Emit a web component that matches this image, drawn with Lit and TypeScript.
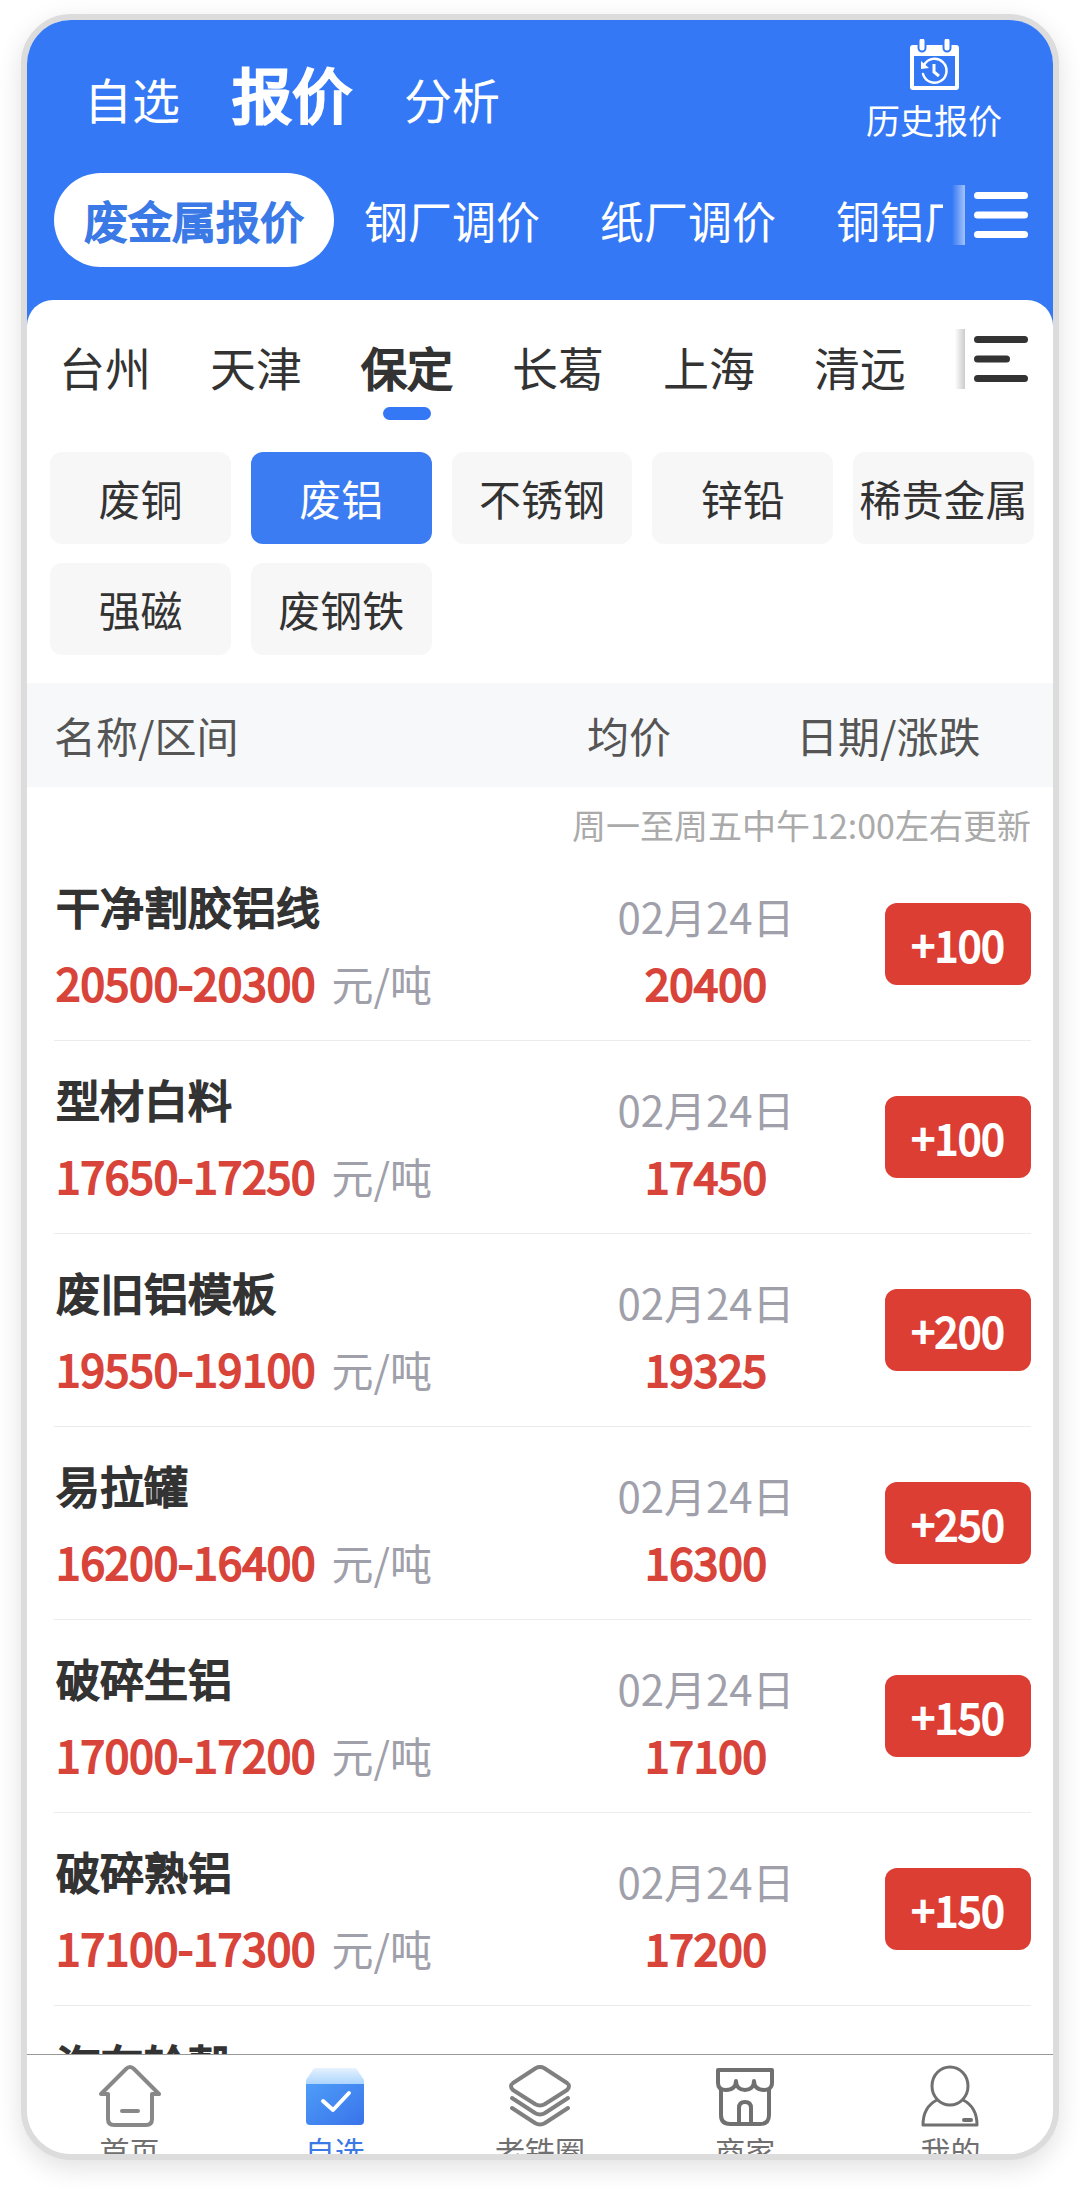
import { LitElement, html, css, svg, nothing } from "lit";
import { customElement, state } from "lit/decorators.js";
import { classMap } from "lit/directives/class-map.js";

interface Quote {
  name: string;
  range?: string;
  date?: string;
  average?: string;
  change?: string;
}

const SECTIONS = ["自选", "报价", "分析"];
const MARKETS = ["废金属报价", "钢厂调价", "纸厂调价", "铜铝厂"];
const CITIES = ["台州", "天津", "保定", "长葛", "上海", "清远"];
const METALS = ["废铜", "废铝", "不锈钢", "锌铅", "稀贵金属", "强磁", "废钢铁"];

const QUOTES: Quote[] = [
  { name: "干净割胶铝线", range: "20500-20300", date: "02月24日", average: "20400", change: "+100" },
  { name: "型材白料", range: "17650-17250", date: "02月24日", average: "17450", change: "+100" },
  { name: "废旧铝模板", range: "19550-19100", date: "02月24日", average: "19325", change: "+200" },
  { name: "易拉罐", range: "16200-16400", date: "02月24日", average: "16300", change: "+250" },
  { name: "破碎生铝", range: "17000-17200", date: "02月24日", average: "17100", change: "+150" },
  { name: "破碎熟铝", range: "17100-17300", date: "02月24日", average: "17200", change: "+150" },
  { name: "汽车轮毂" },
];

const ICONS = {
  home: svg`
    <g fill="none" stroke="#888" stroke-width="4" stroke-linejoin="round" stroke-linecap="round">
      <path d="M9 29H2L27 4Q31 0 35 4L60 29H53V54Q53 60 47 60H15Q9 60 9 54Z" />
      <path d="M23 46H39" />
    </g>`,
  box: svg`
    <defs>
      <linearGradient id="lid" x1="0" y1="0" x2="0" y2="1">
        <stop offset="0" stop-color="#e6f2fe" /><stop offset="1" stop-color="#a9d3fd" />
      </linearGradient>
      <linearGradient id="body" x1="0" y1="0" x2="1" y2="1">
        <stop offset="0" stop-color="#4e9df8" /><stop offset="1" stop-color="#3973ea" />
      </linearGradient>
    </defs>
    <path d="M12 3H50Q53 3 54 6L60 15V20H2V15L8 6Q9 3 12 3Z" fill="url(#lid)" />
    <path d="M2 19H60V56Q60 60 56 60H6Q2 60 2 56Z" fill="url(#body)" />
    <path d="M19 36L29 45L45 28" fill="none" stroke="#fff" stroke-width="4" stroke-linecap="round" stroke-linejoin="round" />`,
  layers: svg`
    <g fill="none" stroke="#808080" stroke-width="4" stroke-linecap="round" stroke-linejoin="round">
      <path d="M27 3Q31 1 35 3L58 18Q62 21 58 25L36 39Q31 42 26 39L4 25Q0 21 4 18Z" />
      <path d="M3 33L26 48Q31 51 36 48L59 33" />
      <path d="M3 43L26 58Q31 61 36 58L59 43" />
    </g>`,
  shop: svg`
    <g fill="none" stroke="#707070" stroke-width="4" stroke-linejoin="round">
      <path d="M4 5H58V18C58 23 54 25 50 25C44 25 40 22 40 16C40 22 36 25 31 25C26 25 22 22 22 16C22 22 18 25 12 25C7 25 4 23 4 18Z" />
      <path d="M7 24V50Q7 59 16 59H46Q55 59 55 50V24" />
      <path d="M25 59V43Q25 37 31 37Q37 37 37 43V59" />
    </g>`,
  person: svg`
    <g fill="none" stroke="#707070" stroke-width="3" stroke-linejoin="round">
      <ellipse cx="31" cy="21" rx="18" ry="19" />
      <path d="M18 35Q4 42 4 60H58Q58 42 44 35" />
      <path d="M45 55H52" stroke-width="4" stroke-linecap="round" />
    </g>`,
};

const NAV = [
  { label: "首页", icon: ICONS.home },
  { label: "自选", icon: ICONS.box },
  { label: "老铁圈", icon: ICONS.layers },
  { label: "商家", icon: ICONS.shop },
  { label: "我的", icon: ICONS.person },
];

@customElement("app-root")
export class AppRoot extends LitElement {
  static styles = css`
    :host {
      display: block;
      box-sizing: border-box;
      height: 100vh;
      padding: 14px 21px 29px;
      background: #fff;
      color: #333;
      font-family: "Noto Sans CJK SC", sans-serif;
    }
    *,
    *::before,
    *::after {
      box-sizing: border-box;
    }
    button {
      flex: none;
      margin: 0;
      padding: 0;
      border: 0;
      background: none;
      color: inherit;
      font: inherit;
      white-space: nowrap;
      cursor: pointer;
    }
    svg {
      display: block;
    }
    .frame {
      display: flex;
      flex-direction: column;
      height: 100%;
      overflow: hidden;
      border: 6px solid #dcdcdc;
      border-radius: 50px;
      background: #fff;
      box-shadow: 0 8px 26px rgba(0, 0, 0, 0.12);
    }
    .top {
      flex: none;
      padding: 19px 25px 59px 27px;
      background: #3478f5;
      color: #fff;
    }
    .top-row {
      display: flex;
      justify-content: space-between;
      align-items: flex-start;
      padding: 0 26px 0 30px;
      margin-bottom: 33px;
    }
    .sections {
      display: flex;
      align-items: baseline;
      gap: 52px;
      padding-top: 18px;
      font-size: 48px;
      line-height: 72px;
    }
    .sections .on {
      font-size: 60px;
      -webkit-text-stroke: 3px #fff;
    }
    .history {
      display: flex;
      flex-direction: column;
      align-items: center;
      gap: 10px;
      font-size: 34px;
      line-height: 40px;
    }
    .row {
      display: flex;
      align-items: flex-start;
    }
    .markets {
      display: flex;
      flex: 1;
      min-width: 0;
      overflow: hidden;
      font-size: 44px;
      line-height: 94px;
    }
    .markets button {
      padding: 0 30px;
      border-radius: 47px;
    }
    .markets .on {
      background: #fff;
      color: #3b79e6;
      -webkit-text-stroke: 2px #3b79e6;
    }
    .more {
      display: flex;
      align-items: center;
      gap: 9px;
      height: 60px;
      margin-left: 9px;
    }
    .more::before {
      content: "";
      width: 13px;
      height: 60px;
      background: linear-gradient(to right, rgba(255, 255, 255, 0), rgba(255, 255, 255, 0.55));
    }
    .more.dark::before {
      background: linear-gradient(to right, rgba(0, 0, 0, 0) 20%, rgba(0, 0, 0, 0.2));
    }
    .top .more {
      margin-top: 12px;
    }
    .card {
      display: flex;
      flex: 1;
      flex-direction: column;
      min-height: 0;
      margin-top: -26px;
      overflow: hidden;
      border-radius: 26px 26px 0 0;
      background: #fff;
    }
    .city-row {
      flex: none;
      justify-content: space-between;
      padding: 29px 25px 0 32px;
    }
    .cities {
      display: flex;
      gap: 59px;
      padding-top: 4px;
      font-size: 46px;
      line-height: 66px;
    }
    .cities button {
      display: flex;
      flex-direction: column;
      align-items: center;
      gap: 8px;
    }
    .cities button::after {
      content: "";
      width: 48px;
      height: 13px;
      border-radius: 7px;
    }
    .cities .on {
      -webkit-text-stroke: 2px #333;
    }
    .cities .on::after {
      background: #3478f5;
    }
    .metals {
      display: grid;
      flex: none;
      grid-template-columns: repeat(5, minmax(0, 1fr));
      gap: 19px 20px;
      padding: 32px 19px 28px 23px;
    }
    .metals button {
      border-radius: 12px;
      background: #f7f7f7;
      font-size: 42px;
      line-height: 92px;
    }
    .metals .on {
      background: #3c7cf3;
      color: #fff;
    }
    table,
    thead,
    tbody {
      display: block;
    }
    table {
      flex: 1;
      min-height: 0;
      overflow: hidden;
    }
    th,
    td {
      display: block;
      padding: 0;
      text-align: left;
      white-space: nowrap;
    }
    tr {
      display: grid;
      align-items: center;
    }
    .head {
      grid-template-columns: 533fr 209fr 235fr;
      padding: 0 22px 0 27px;
      background: #f6f8fa;
      color: #555;
      font-size: 42px;
      line-height: 104px;
    }
    .head th {
      font-weight: 400;
    }
    .note {
      padding: 15px 22px 0;
      color: #aaa;
      font-size: 34px;
      line-height: 46px;
    }
    .note td {
      text-align: right;
    }
    .quote {
      grid-template-columns: 496fr 312fr 169fr;
      margin: 0 22px 0 27px;
      padding: 20px 0;
      border-bottom: 1px solid #ececee;
      font-size: 44px;
      line-height: 76px;
    }
    .item {
      padding-left: 2px;
    }
    .name {
      -webkit-text-stroke: 2px #333;
    }
    .price {
      color: #d8443a;
      -webkit-text-stroke: 2px #d8443a;
    }
    .unit {
      margin-left: 16px;
      color: #a0a0ab;
      font-size: 42px;
      line-height: 1;
    }
    .middle {
      align-self: end;
      text-align: center;
    }
    .date {
      color: #a0a0ab;
      font-size: 42px;
      line-height: 56px;
    }
    .last {
      display: flex;
      justify-content: flex-end;
    }
    .change {
      min-width: 146px;
      border-radius: 12px;
      background: #dc3e34;
      color: #fff;
      font-size: 42px;
      line-height: 82px;
      text-align: center;
      -webkit-text-stroke: 2px #fff;
    }
    .nav {
      display: grid;
      flex: none;
      grid-template-columns: repeat(5, minmax(0, 1fr));
      height: 100px;
      overflow: hidden;
      border-top: 1px solid #999;
      background: #fff;
      color: #707070;
    }
    .nav a {
      display: flex;
      flex-direction: column;
      align-items: center;
      gap: 3px;
      padding-top: 10px;
      color: inherit;
      font-size: 30px;
      line-height: 40px;
      text-decoration: none;
      white-space: nowrap;
    }
    .nav .on {
      color: #3b79e6;
    }
  `;

  @state() private section = "报价";
  @state() private market = "废金属报价";
  @state() private city = "保定";
  @state() private metal = "废铝";

  private choices(list: string[], current: string, pick: (v: string) => void) {
    return list.map(
      (item) => html`<button
        type="button"
        class=${classMap({ on: item === current })}
        aria-pressed=${item === current ? "true" : "false"}
        @click=${() => pick(item)}
      >${item}</button>`
    );
  }

  private quote(q: Quote) {
    return html`<tr class="quote">
      <td class="item">
        <div class="name">${q.name}</div>
        ${q.range
          ? html`<div><span class="price">${q.range}</span><span class="unit">元/吨</span></div>`
          : nothing}
      </td>
      <td class="middle">
        ${q.average
          ? html`<div class="date">${q.date}</div><div class="price">${q.average}</div>`
          : nothing}
      </td>
      <td class="last">
        ${q.change ? html`<span class="change">${q.change}</span>` : nothing}
      </td>
    </tr>`;
  }

  render() {
    return html`<main class="frame">
      <header class="top">
        <div class="top-row">
          <nav class="sections">
            ${this.choices(SECTIONS, this.section, (v) => (this.section = v))}
          </nav>
          <button type="button" class="history">
            <svg width="49" height="51" viewBox="0 0 49 51" aria-hidden="true">
              <path fill="#fff" fill-rule="evenodd" d="M3 6H46Q49 6 49 9V48Q49 51 46 51H3Q0 51 0 48V9Q0 6 3 6ZM4 17V47H45V17Z" />
              <path d="M12 5V9M37 5V9" stroke="#3478f5" stroke-width="9" stroke-linecap="round" />
              <path d="M12 2V9M37 2V9" stroke="#fff" stroke-width="5" stroke-linecap="round" />
              <g fill="none" stroke="#fff" stroke-width="2.5">
                <path d="M14 26A12 12 0 1 1 13 35" stroke-linecap="round" />
                <path d="M24 25V33L29 37" stroke-width="3" />
              </g>
              <path d="M11 22V30L19 29Z" fill="#fff" />
            </svg>
            <span>历史报价</span>
          </button>
        </div>
        <div class="row">
          <nav class="markets">
            ${this.choices(MARKETS, this.market, (v) => (this.market = v))}
          </nav>
          <button type="button" class="more" aria-label="更多">
            <svg width="54" height="46" viewBox="0 0 54 46" fill="#fff" aria-hidden="true">
              <rect width="54" height="7" rx="3.5" />
              <rect y="19.5" width="54" height="7" rx="3.5" />
              <rect y="39" width="54" height="7" rx="3.5" />
            </svg>
          </button>
        </div>
      </header>
      <section class="card">
        <div class="row city-row">
          <nav class="cities">
            ${this.choices(CITIES, this.city, (v) => (this.city = v))}
          </nav>
          <button type="button" class="more dark" aria-label="更多">
            <svg width="54" height="46" viewBox="0 0 54 46" fill="#333" aria-hidden="true">
              <rect width="54" height="7" rx="3.5" />
              <rect y="19.5" width="36" height="7" rx="3.5" />
              <rect y="39" width="54" height="7" rx="3.5" />
            </svg>
          </button>
        </div>
        <div class="metals">
          ${this.choices(METALS, this.metal, (v) => (this.metal = v))}
        </div>
        <table>
          <thead>
            <tr class="head">
              <th scope="col">名称/区间</th>
              <th scope="col">均价</th>
              <th scope="col">日期/涨跌</th>
            </tr>
          </thead>
          <tbody>
            <tr class="note">
              <td colspan="3">周一至周五中午12:00左右更新</td>
            </tr>
            ${QUOTES.map((q) => this.quote(q))}
          </tbody>
        </table>
      </section>
      <nav class="nav">
        ${NAV.map(
          (n, i) => html`<a href="#" class=${classMap({ on: i === 1 })}>
            <svg width="62" height="62" viewBox="0 0 62 62" aria-hidden="true">${n.icon}</svg>
            <span>${n.label}</span>
          </a>`
        )}
      </nav>
    </main>`;
  }
}
